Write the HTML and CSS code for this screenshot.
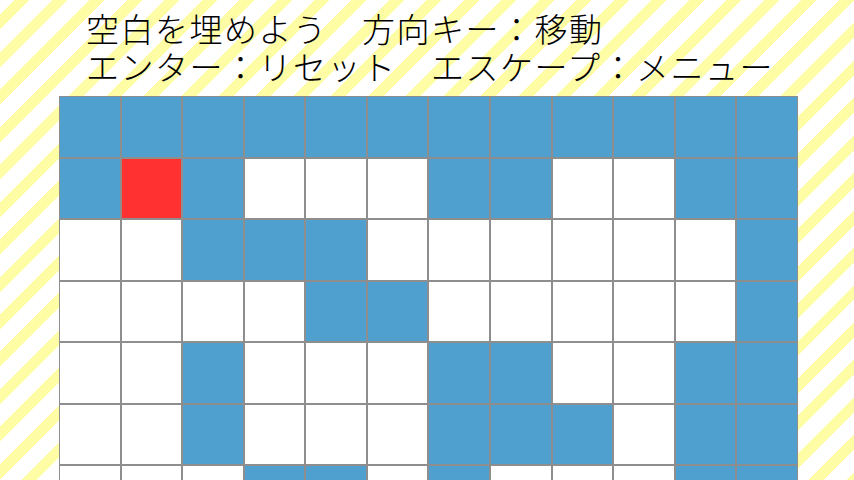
FILE: index.html
```html
<!DOCTYPE html>
<html lang="ja">
<head>
<meta charset="utf-8">
<title>空白を埋めよう</title>
<link rel="stylesheet" href="styles.css">
</head>
<body>
<div class="screen">
  <div class="help">
    <div class="line">空白を埋めよう　方向キー：移動</div>
    <div class="line">エンター：リセット　エスケープ：メニュー</div>
  </div>
  <div class="board">
    <div class="c b"></div><div class="c b"></div><div class="c b"></div><div class="c b"></div><div class="c b"></div><div class="c b"></div><div class="c b"></div><div class="c b"></div><div class="c b"></div><div class="c b"></div><div class="c b"></div><div class="c b"></div>
    <div class="c b"></div><div class="c r"></div><div class="c b"></div><div class="c w"></div><div class="c w"></div><div class="c w"></div><div class="c b"></div><div class="c b"></div><div class="c w"></div><div class="c w"></div><div class="c b"></div><div class="c b"></div>
    <div class="c w"></div><div class="c w"></div><div class="c b"></div><div class="c b"></div><div class="c b"></div><div class="c w"></div><div class="c w"></div><div class="c w"></div><div class="c w"></div><div class="c w"></div><div class="c w"></div><div class="c b"></div>
    <div class="c w"></div><div class="c w"></div><div class="c w"></div><div class="c w"></div><div class="c b"></div><div class="c b"></div><div class="c w"></div><div class="c w"></div><div class="c w"></div><div class="c w"></div><div class="c w"></div><div class="c b"></div>
    <div class="c w"></div><div class="c w"></div><div class="c b"></div><div class="c w"></div><div class="c w"></div><div class="c w"></div><div class="c b"></div><div class="c b"></div><div class="c w"></div><div class="c w"></div><div class="c b"></div><div class="c b"></div>
    <div class="c w"></div><div class="c w"></div><div class="c b"></div><div class="c w"></div><div class="c w"></div><div class="c w"></div><div class="c b"></div><div class="c b"></div><div class="c b"></div><div class="c w"></div><div class="c b"></div><div class="c b"></div>
    <div class="c w"></div><div class="c w"></div><div class="c w"></div><div class="c b"></div><div class="c b"></div><div class="c w"></div><div class="c b"></div><div class="c w"></div><div class="c w"></div><div class="c w"></div><div class="c b"></div><div class="c b"></div>
  </div>
</div>
</body>
</html>
```

FILE: styles.css
```css
html, body {
  margin: 0;
  padding: 0;
}

body {
  width: 854px;
  height: 480px;
  overflow: hidden;
}

.screen {
  width: 854px;
  height: 480px;
  overflow: hidden;
  background: repeating-linear-gradient(135deg,
    #ffffff 0 10.4px,
    #fffca6 10.4px 21px,
    #ffffff 21px 26.5px);
}

.help {
  padding: 9px 0 0 86px;
  height: 96px;
  box-sizing: border-box;
  font-family: "Noto Sans CJK JP", "Noto Sans", sans-serif;
  font-size: 33px;
  letter-spacing: 1.5px;
  line-height: 38px;
  color: #000;
  white-space: nowrap;
  font-weight: 300;
}

.line {
  height: 38px;
}

.board {
  margin-left: 59px;
  display: grid;
  grid-template-columns: repeat(12, 61.58px);
  grid-auto-rows: 61.5px;
  width: 739px;
}

.c {
  box-sizing: border-box;
  border: 1px solid #8e8e8e;
}

.b { background: #4f9fcf; }
.w { background: #ffffff; }
.r { background: #ff3131; }
```
